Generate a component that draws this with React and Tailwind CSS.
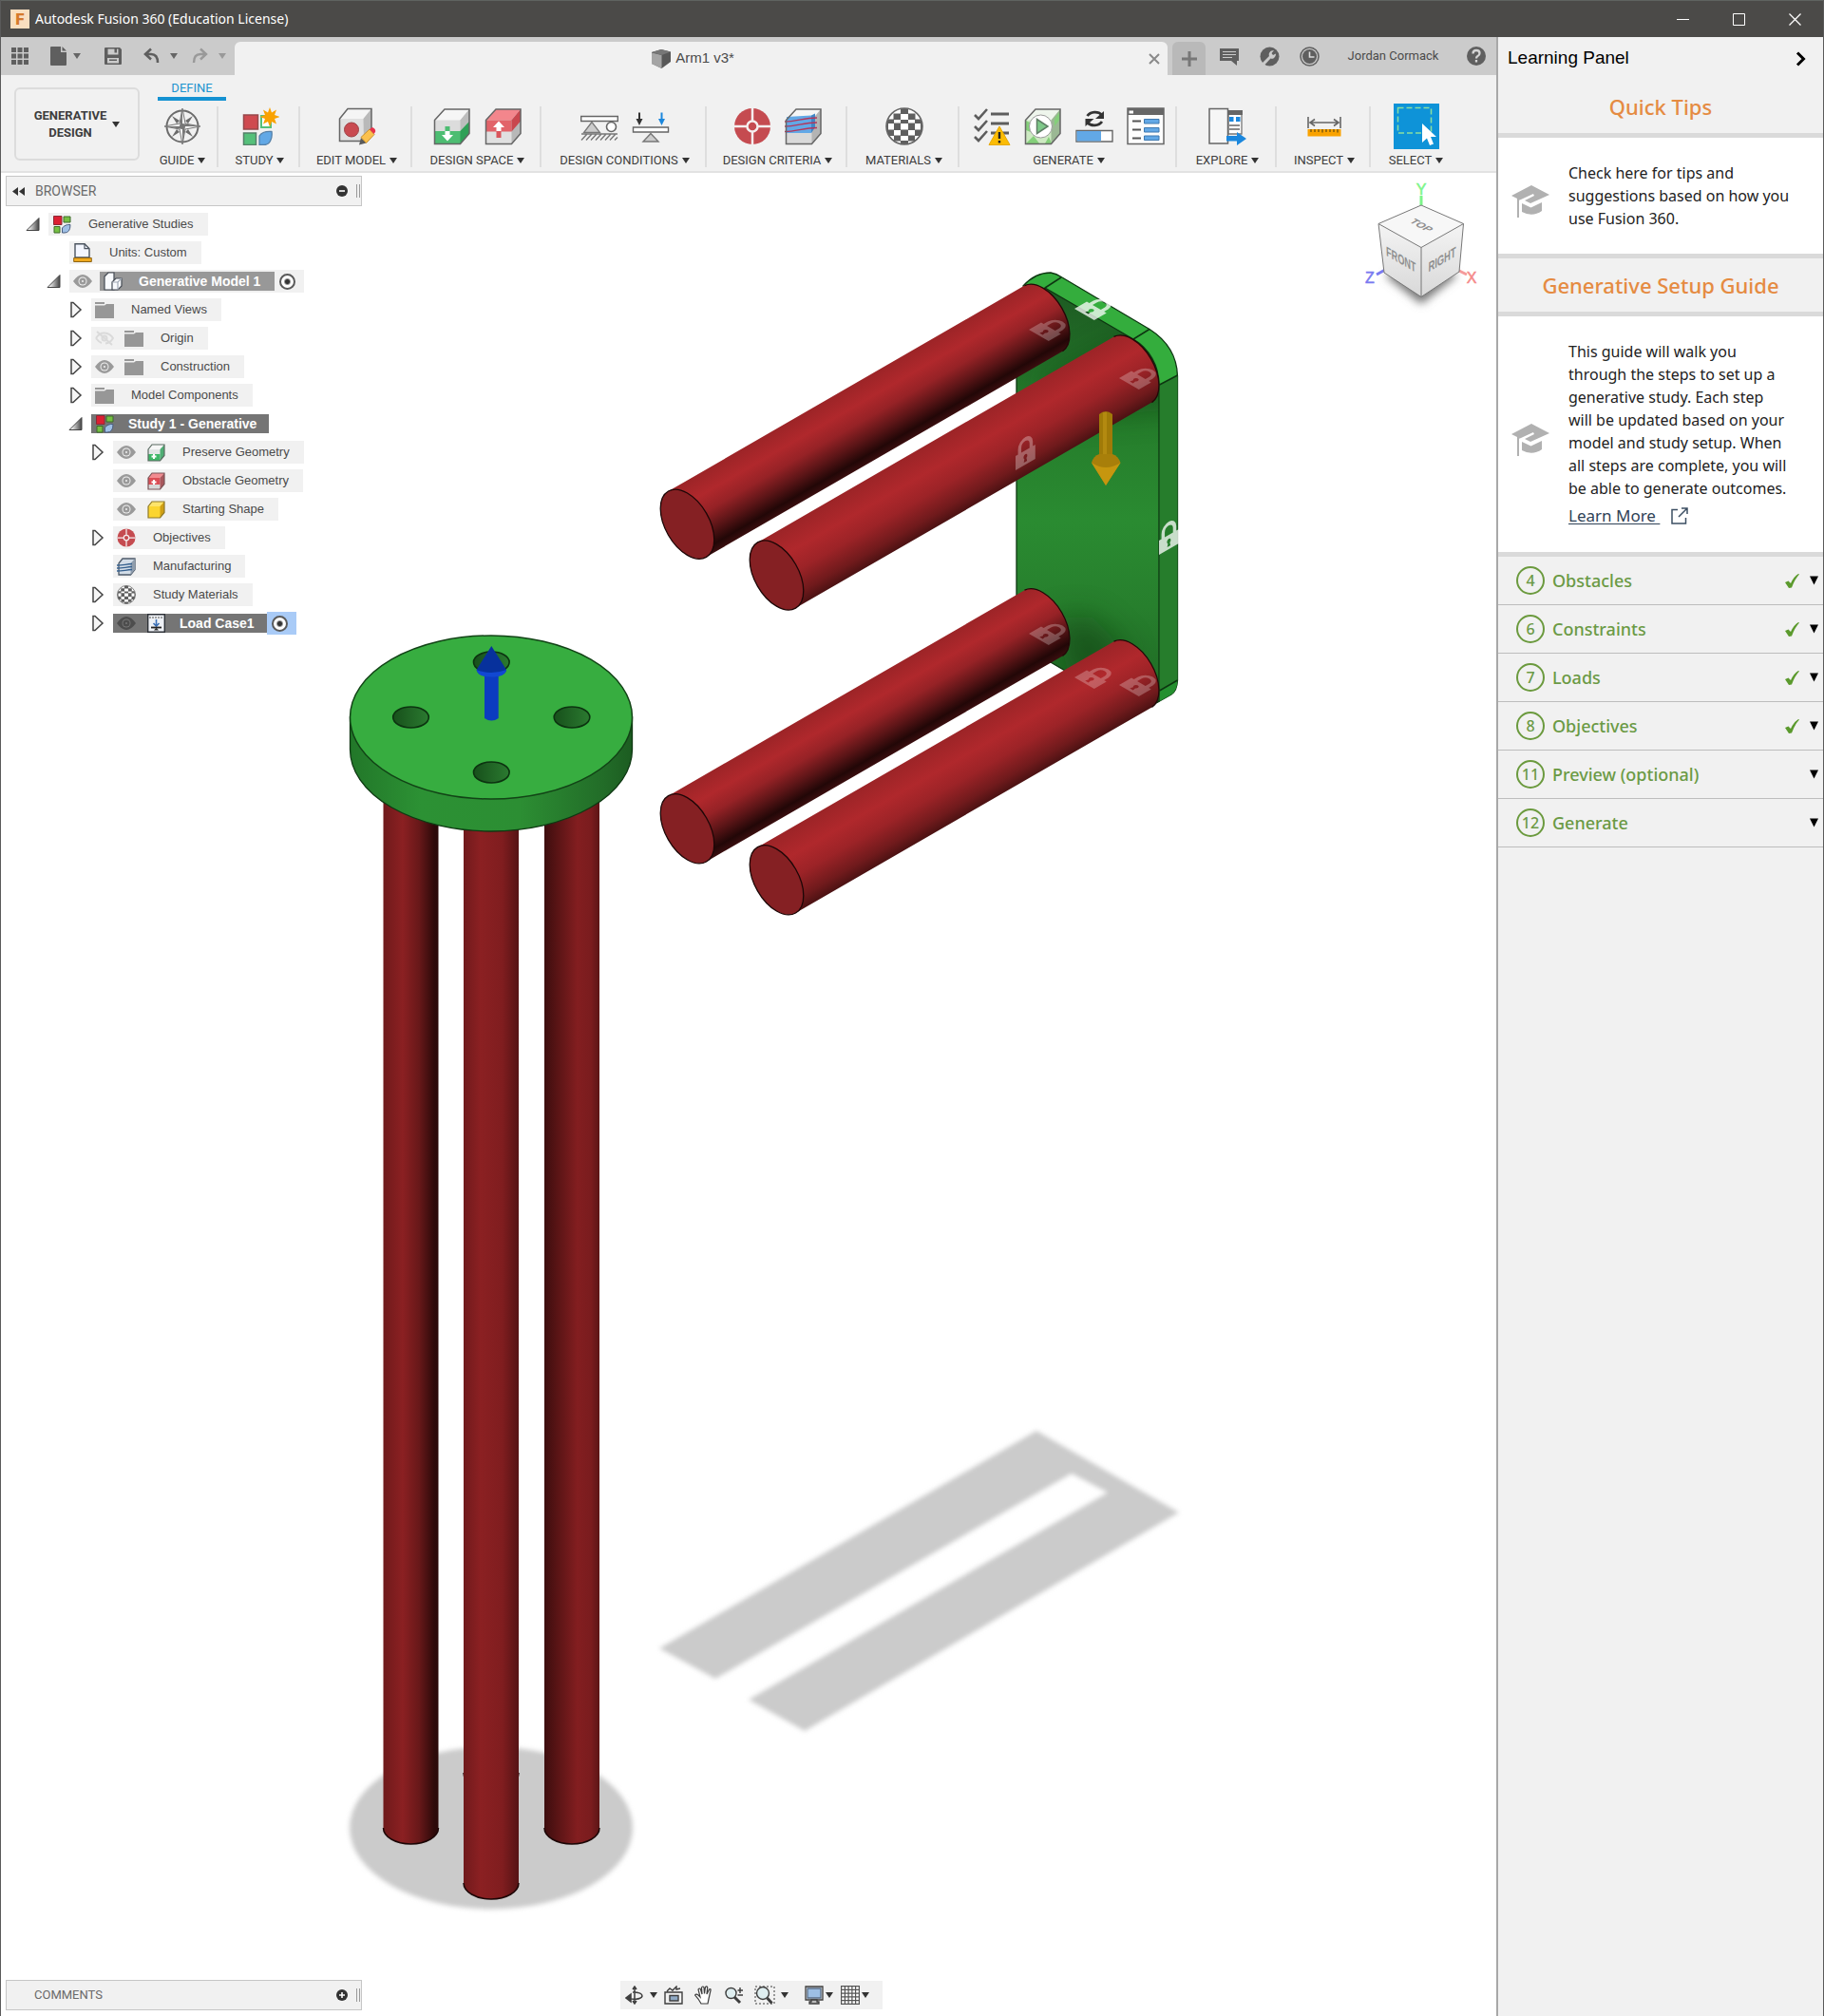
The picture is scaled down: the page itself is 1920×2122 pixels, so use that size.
import React from "react";

/* ---------- small shared pieces ---------- */

function Caret({ className = "text-[#333]" }) {
  return (
    <svg width="8" height="6" viewBox="0 0 8 6" className={className} aria-hidden="true">
      <path d="M0 0h8L4 6z" fill="currentColor" />
    </svg>
  );
}

function IconButton({ label, children, className = "" }) {
  return (
    <button type="button" aria-label={label} className={"flex shrink-0 items-center justify-center " + className}>
      {children}
    </button>
  );
}

function Svg({ size = 40, children }) {
  return (
    <svg width={size} height={size} viewBox="0 0 40 40" fill="none" aria-hidden="true">
      {children}
    </svg>
  );
}

/* ---------- ribbon icons ---------- */

const CompassIcon = () => (
  <Svg>
    <circle cx="20" cy="20" r="16.500" stroke="#6b6b6b" strokeWidth="2" />
    <path d="M9 9l8 5-3 3zM31 9l-8 5 3 3zM9 31l8-5-3-3zM31 31l-8-5 3-3z" fill="#6b6b6b" />
    <path d="M20 1l3 16 16 3-16 3-3 16-3-16-16-3 16-3z" fill="#f2f2f2" stroke="#777" strokeWidth="1" />
    <path d="M20 1v19h-3zM39 20H20v-3zM20 39V20h3zM1 20h19v3z" fill="#777" />
  </Svg>
);

const StudyIcon = () => (
  <Svg>
    <path d="M2.500 8h15v15h-15z" fill="#cf4a50" stroke="#96484b" strokeWidth="1.500" />
    <path d="M2.500 27h13v12.500h-13z" fill="#55c07a" stroke="#55806a" strokeWidth="1.500" />
    <path d="M21 9h10v12H21z" fill="#fff" stroke="#55c07a" strokeWidth="2" />
    <path d="M19 39.500V30c2-3 7-5 13-4.500C33 33 30 39.500 24 39.500z" fill="#62a8e6" stroke="#5580a8" strokeWidth="1.300" />
    <path d="M30 0l2 5.500 5-3-2 5.500 5.500 2-5.500 2 2 5.500-5-2.500-2 5.500-2-5.500-5 2.500 2-5.500-5.500-2 5.500-2-2-5.500 5 3z" fill="#f9a200" />
  </Svg>
);

function Cube({ front, top, side, children }) {
  return (
    <Svg>
      <path d="M1.500 13.500L12 2h26v25.500L28.500 38.500h-27z" fill={front} />
      <path d="M1.500 13.500L12 2h26l-9.500 11.500z" fill={top} />
      <path d="M28.500 13.500L38 2v25.500l-9.500 11z" fill={side} />
      {children}
      <path d="M1.500 13.500L12 2h26v25.500L28.500 38.500h-27z" stroke="#666" strokeWidth="1.500" />
    </Svg>
  );
}

const EditModelIcon = () => (
  <Svg>
    <path d="M1.500 12L10 1.500h25V26l-8 9.500H1.500z" fill="#e0e0e0" />
    <path d="M1.500 12L10 1.500h25L26.500 12z" fill="#f5f5f5" />
    <path d="M26.500 12L35 1.500V26l-8 9.500z" fill="#b9b9b9" />
    <path d="M1.500 12L10 1.500h25V26l-8 9.500H1.500z" stroke="#666" strokeWidth="1.500" />
    <circle cx="14" cy="23.500" r="7.500" fill="#c94a50" stroke="#9d4044" />
    <path d="M22 39.500l2-7.500 5.500 5.500z" fill="#5b5b5b" />
    <path d="M24 31.500l9-8.500 5 5.500-8.500 9z" fill="#fbc14d" stroke="#c8902c" />
    <path d="M33 23l2-1.500c2-1 5 2 4 4.500l-1.500 2z" fill="#e8334b" />
  </Svg>
);

const PreserveIcon = () => (
  <Cube front="#dcdcdc" top="#f6f6f6" side="#bdbdbd">
    <path d="M1.500 25h27L38 15v12.500l-9.500 11h-27z" fill="#4dbd72" />
    <path d="M28.500 25L38 15v12.500l-9.500 11z" fill="#2fa057" />
    <path d="M12.500 20h5v5h-5z" fill="#4dbd72" />
    <path d="M12.500 25h5v4h3.500l-6 6.500-6-6.500h3.500z" fill="#fff" />
  </Cube>
);

const ObstacleIcon = () => (
  <Cube front="#e0e0e0" top="#f3868c" side="#b8b8b8">
    <path d="M1.500 13.500h27v12h-27z" fill="#e26369" />
    <path d="M28.500 13.500L38 2v12.500l-9.500 11z" fill="#c9474e" />
    <path d="M12.500 25h5v7h-5z" fill="#d9555b" />
    <path d="M12.500 25h5v-4H21l-6-6.500L9 21h3.500z" fill="#fff" />
  </Cube>
);

const ConstraintIcon = () => (
  <Svg>
    <path d="M.7 9.500h38.600v5H.7z" fill="#fff" stroke="#666" strokeWidth="1.400" />
    <path d="M12 15.500L3.500 26.500h17z" fill="#ccc" stroke="#777" strokeWidth="1.300" />
    <circle cx="32.500" cy="20.500" r="5" fill="#fff" stroke="#666" strokeWidth="1.600" />
    <path d="M1 28h38M1 34.500L7 28M6 34.500l6-6.500M11 34.500l6-6.500M16 34.500l6-6.500M21 34.500l6-6.500M26 34.500l6-6.500M31 34.500l6-6.500M36 34.500l3-3" stroke="#777" strokeWidth="1.400" />
  </Svg>
);

const LoadIcon = () => (
  <Svg>
    <path d="M8 5.500v10" stroke="#333" strokeWidth="2" />
    <path d="M4.500 12h7L8 19z" fill="#333" />
    <path d="M31.500 5.500v10" stroke="#1b87dd" strokeWidth="2" />
    <path d="M28 12h7l-3.500 7z" fill="#1b87dd" />
    <path d="M1.500 21h37v5h-37z" fill="#fff" stroke="#666" strokeWidth="1.400" />
    <path d="M20 27.500l-8 8.500h16z" fill="#ccc" stroke="#777" strokeWidth="1.400" />
  </Svg>
);

const TargetIcon = ({ size }) => (
  <Svg size={size}>
    <circle cx="20" cy="20" r="19" fill="#c54b50" />
    <path d="M20 1v38M1 20h38" stroke="#f5eeee" strokeWidth="2.500" />
    <circle cx="20" cy="20" r="5.500" fill="#c54b50" stroke="#f5eeee" strokeWidth="2.500" />
  </Svg>
);

const ManufacturingIcon = () => (
  <Cube front="#d9d9d9" top="#f6f6f6" side="#b4b4b4">
    <path d="M2 10l26-1.500V27H2z" fill="#62a8e6" />
    <path d="M28 8.500l4-2V21l-4 6z" fill="#3f86c6" />
    <path d="M0 15c12 0 20-4 34-4M0 20c12 0 20-4 34-4M0 25.500c12 0 20-4 34-4" stroke="#b2365c" strokeWidth="1.500" />
  </Cube>
);

const MaterialsIcon = ({ size }) => (
  <svg width={size || 40} height={size || 40} viewBox="0 0 40 40" fill="none" aria-hidden="true">
    <defs>
      <clipPath id="ball">
        <circle cx="20" cy="20" r="19" />
      </clipPath>
    </defs>
    <circle cx="20" cy="20" r="19" fill="#fff" />
    <g clipPath="url(#ball)" fill="#5f5f5f">
      <path d="M16 0h8v7h-8zM8.500 6.500H16V13H8.500zM24 6.500h7.500V13H24zM1 12.500h8V17H1zM16 13h8v4h-8zM31 12.500h8V17h-8zM9 16.500h7v7.500H9zM24 16.500h7v7.500h-7zM0 16.500h3v7H0zM37 16.500h3v7h-3zM16 23.500h8V30h-8zM2 23.500h7V30H2zM31 23.500h7V30h-7zM9 29.500h7v6H9zM24 29.500h7v6h-7zM16 35h8v5h-8z" />
    </g>
    <circle cx="20" cy="20" r="19" stroke="#666" strokeWidth="1.600" />
  </svg>
);

const PrecheckIcon = () => (
  <Svg>
    <path d="M2 8l4 4 9-10M2 20l4 4 9-10M2 31l4 4 9-10" stroke="#5d5d5d" strokeWidth="2.600" />
    <path d="M19 7h19M19 17h19M19 27h19" stroke="#5d5d5d" strokeWidth="3.200" />
    <path d="M28 20l11 19.500H17z" fill="#fbbc05" stroke="#e6a800" />
    <path d="M28 26v7M28 35v2.500" stroke="#222" strokeWidth="2.400" />
  </Svg>
);

const PlayIcon = () => (
  <Cube front="#cdeac2" top="#eef5ec" side="#9bb894">
    <path d="M2 14l8 4-3 8-5-2zM2 38l8-8 6 8zM22 38l4-7 3 7zM32 12l6-8v8l-6 8z" fill="#84cf7a" />
    <circle cx="17.500" cy="20" r="12" fill="#fff" stroke="#9a9a9a" />
    <path d="M13.500 12.500v15L25 20z" fill="#7fc98a" stroke="#5f7f66" strokeWidth="1.500" />
  </Cube>
);

const ProgressIcon = () => (
  <Svg>
    <path d="M12.500 9A9.500 8 0 0 1 28 8M28 15a9.500 8 0 0 1-15.500 1" stroke="#333" strokeWidth="2.800" />
    <path d="M30 4v8h-9zM10.500 20v-8h9z" fill="#333" />
    <path d="M1 24.500h38V36H1z" fill="#fff" stroke="#666" strokeWidth="1.400" />
    <path d="M1.500 25H27v10.500H1.500z" fill="#62a8e6" />
  </Svg>
);

const TableIcon = () => (
  <Svg>
    <path d="M1 1h38v37.500H1z" fill="#fdfdfd" stroke="#666" strokeWidth="1.500" />
    <path d="M1 1h38v7H1z" fill="#666" />
    <path d="M2.500 3.500H7v3H2.500z" fill="#fff" />
    <path d="M6 14.500h9M6 23.500h9M6 32.500h9" stroke="#555" strokeWidth="1.800" />
    <path d="M18.500 12.500H34V17H18.500zM18.500 21.500H34V26H18.500zM18.500 30H34v4.500H18.500z" fill="#62a8e6" stroke="#3f79b0" strokeWidth="1" />
  </Svg>
);

const ExploreIcon = () => (
  <Svg>
    <path d="M21 4h14v24H21z" fill="#fff" stroke="#777" strokeWidth="1.300" />
    <path d="M20 3h16v5H20z" fill="#666" />
    <path d="M22 10h4.500v5H22zM29 10h4.500v5H29z" fill="#1b87dd" />
    <path d="M22 19h11M22 23h11" stroke="#666" strokeWidth="1.500" />
    <path d="M1 1.500h19.500v36.500H1z" fill="#f6f6f6" stroke="#666" strokeWidth="1.500" />
    <path d="M19 30h11v-4l10 7-10 7v-4.500H19z" fill="#1b87dd" />
  </Svg>
);

const InspectIcon = () => (
  <Svg>
    <path d="M3 10v12M37 10v12" stroke="#666" strokeWidth="1.600" />
    <path d="M5 16h30M10 12.500L5 16l5 3.500M30 12.500l5 3.500-5 3.500" stroke="#666" strokeWidth="1.600" />
    <path d="M2.500 23h35v7.500h-35z" fill="#f9a200" />
    <path d="M6 23v3M10 23v3M14 23v3M18 23v3.500M22 23v3M26 23v3M30 23v3M34 23v3.500" stroke="#6d5210" strokeWidth="1.300" />
  </Svg>
);

const SelectIcon = () => (
  <svg width="48" height="48" viewBox="0 0 48 48" className="bg-[#0e93d8]" aria-hidden="true">
    <rect x="4.500" y="4.500" width="35" height="26.500" fill="none" stroke="#8be0a0" strokeWidth="1.500" strokeDasharray="6 3" />
    <path d="M30 21v20l5-4.500 3 7.500 4-1.500-3-7.500h6z" fill="#fff" />
  </svg>
);

const GROUPS = [
  { name: "GUIDE", width: "w-[77px]", icons: [["Guide", CompassIcon]] },
  { name: "STUDY", width: "w-[86px]", icons: [["New study", StudyIcon]] },
  { name: "EDIT MODEL", width: "w-[118px]", icons: [["Edit model", EditModelIcon]] },
  { name: "DESIGN SPACE", width: "w-[136px]", icons: [["Preserve geometry", PreserveIcon], ["Obstacle geometry", ObstacleIcon]] },
  { name: "DESIGN CONDITIONS", width: "w-[174px]", icons: [["Structural constraints", ConstraintIcon], ["Structural loads", LoadIcon]] },
  { name: "DESIGN CRITERIA", width: "w-[148px]", icons: [["Objectives", TargetIcon], ["Manufacturing", ManufacturingIcon]] },
  { name: "MATERIALS", width: "w-[118px]", icons: [["Study materials", MaterialsIcon]] },
  { name: "GENERATE", width: "w-[229px]", icons: [["Pre-check", PrecheckIcon], ["Previewer", PlayIcon], ["Generate", ProgressIcon], ["Job status", TableIcon]] },
  { name: "EXPLORE", width: "w-[105px]", icons: [["Explore outcomes", ExploreIcon]] },
  { name: "INSPECT", width: "w-[99px]", icons: [["Measure", InspectIcon]] },
  { name: "SELECT", width: "w-[95px]", icons: [["Select", SelectIcon]], last: true },
];

function Ribbon() {
  return (
    <div className="flex h-[103px] items-start border-b-2 border-[#e2e2e2] bg-[#f1f1f1] font-['Roboto',sans-serif] text-[13px] text-[#3d3d3d]">
      <button
        type="button"
        className="mt-[13px] ml-[14px] flex h-[77px] w-[132px] shrink-0 items-center justify-center gap-1.5 rounded-md border-2 border-[#dcdcdc] font-bold leading-[18px]"
      >
        <span>
          GENERATIVE
          <br />
          DESIGN
        </span>
        <Caret />
      </button>
      <div className="ml-[6px] flex flex-col">
        <div role="tablist" className="flex h-[33px] pl-[13px]">
          <button type="button" role="tab" aria-selected="true" className="h-[27px] w-[72px] border-b-4 border-[#1592d2] pt-1 leading-[18px] text-[#1d94cf]">
            DEFINE
          </button>
        </div>
        <div className="flex h-[64px]">
          {GROUPS.map((g) => (
            <div
              key={g.name}
              className={
                "flex flex-col items-center justify-between " + g.width + (g.last ? "" : " border-r-2 border-[#dedede] pl-[3px]")
              }
            >
              <div className="flex h-[42px] items-center gap-[14px]">
                {g.icons.map(([label, Icon]) => (
                  <IconButton key={label} label={label}>
                    <Icon />
                  </IconButton>
                ))}
              </div>
              <button type="button" className="flex items-center gap-1 leading-[15px] whitespace-nowrap">
                {g.name}
                <Caret />
              </button>
            </div>
          ))}
        </div>
      </div>
    </div>
  );
}

/* ---------- title and tab bars ---------- */

function TitleBar() {
  return (
    <header className="flex h-[39px] items-center justify-between border-t border-[#5f6360] bg-[#4b4a48] pl-[10px] text-white">
      <div className="flex items-center gap-[6px]">
        <span className="flex h-5 w-5 items-center justify-center bg-[#f9dfc0] font-['Roboto',sans-serif] text-[17px] leading-5 font-black text-[#d5792b]">F</span>
        <h1 className="font-['Noto_Sans',sans-serif] text-sm">Autodesk Fusion 360 (Education License)</h1>
      </div>
      <div className="flex">
        <IconButton label="Minimize" className="h-[38px] w-[59px]">
          <svg width="13" height="13" viewBox="0 0 13 13"><path d="M0 6.500h13" stroke="#fff" /></svg>
        </IconButton>
        <IconButton label="Maximize" className="h-[38px] w-[59px]">
          <svg width="13" height="13" viewBox="0 0 13 13"><path d="M.5.5h12v12H.5z" fill="none" stroke="#fff" /></svg>
        </IconButton>
        <IconButton label="Close window" className="h-[38px] w-[59px]">
          <svg width="13" height="13" viewBox="0 0 13 13"><path d="M.5.5l12 12M12.500.5l-12 12" stroke="#fff" strokeWidth="1.300" /></svg>
        </IconButton>
      </div>
    </header>
  );
}

function TabBar() {
  return (
    <nav className="flex h-10 items-end bg-[#cbcbcb] text-[#5f5f5f]">
      <div className="flex h-10 w-[246px] shrink-0 items-center pl-[11px]">
        <IconButton label="Data panel">
          <svg width="18" height="18" viewBox="0 0 18 18" fill="currentColor">
            <path d="M0 0h5v5H0zM6.500 0h5v5h-5zM13 0h5v5h-5zM0 6.500h5v5H0zM6.500 6.500h5v5h-5zM13 6.500h5v5h-5zM0 13h5v5H0zM6.500 13h5v5h-5zM13 13h5v5h-5z" />
          </svg>
        </IconButton>
        <IconButton label="File" className="ml-[23px] gap-[7px]">
          <svg width="17" height="20" viewBox="0 0 17 20" fill="currentColor">
            <path d="M0 1q0-1 1-1h10v6h6v13q0 1-1 1H1q-1 0-1-1zM12.500 0l4.500 4.500h-4.500z" />
          </svg>
          <Caret className="text-[#666]" />
        </IconButton>
        <IconButton label="Save" className="ml-[25px]">
          <svg width="18" height="18" viewBox="0 0 18 18" fill="currentColor" fillRule="evenodd">
            <path d="M0 1q0-1 1-1h15l2 2v15q0 1-1 1H1q-1 0-1-1zM3.500 1.500v6h11v-6H13v4h-2.500v-4zM3 11v5.500h12V11zM5 12.500h8V14H5z" />
          </svg>
        </IconButton>
        <IconButton label="Undo" className="ml-[23px] gap-[11px]">
          <svg width="17" height="18" viewBox="0 0 17 18" fill="none" stroke="currentColor" strokeWidth="2.600">
            <path d="M8 1.500L2 7l6 5.500M2.500 7H8q7 0 7 9" />
          </svg>
          <Caret className="text-[#666]" />
        </IconButton>
        <IconButton label="Redo" className="ml-[15px] gap-[11px] text-[#999]">
          <svg width="17" height="18" viewBox="0 0 17 18" fill="none" stroke="currentColor" strokeWidth="2.400">
            <path d="M9 1.500L15 7l-6 5.500M14.500 7H9q-7 0-7 9" />
          </svg>
          <Caret className="text-[#999]" />
        </IconButton>
      </div>
      <div className="relative flex h-[35px] flex-1 items-center justify-center rounded-t-md bg-[#f1f1f1] pr-[17px] font-['Liberation_Sans',sans-serif] text-[15px] text-[#4a4a4a]">
        <svg width="20" height="20" viewBox="0 0 20 20" aria-hidden="true" className="mr-[5px]">
          <path d="M0 3l10-3 10 2.500V13l-9.500 7L0 15z" fill="#585858" />
          <path d="M0 3.500L10.500 6v14L0 15z" fill="#a5a5a5" />
          <path d="M0 3l10-3 10 2.500L10.500 6z" fill="#777" />
        </svg>
        <span>Arm1 v3*</span>
        <button type="button" aria-label="Close document" className="absolute right-[8px] top-[12px]">
          <svg width="12" height="12" viewBox="0 0 12 12"><path d="M1 1l10 10M11 1L1 11" stroke="#8a8a8a" strokeWidth="2" /></svg>
        </button>
      </div>
      <IconButton label="New document" className="ml-[5px] h-[35px] w-[35px] rounded-t-md bg-[#b9b9b9]">
        <svg width="16" height="16" viewBox="0 0 16 16"><path d="M8 0v16M0 8h16" stroke="#777" strokeWidth="3" /></svg>
      </IconButton>
      <div className="flex h-10 w-[306px] shrink-0 items-center justify-between pl-[15px] pr-[11px]">
        <IconButton label="Comments">
          <svg width="20" height="19" viewBox="0 0 20 19">
            <path d="M0 1h20v13h-2v5l-6-5H0z" fill="#5f5f5f" />
            <path d="M3 4.500h14M3 7.500h14M3 10.500h10" stroke="#cbcbcb" strokeWidth="1.200" />
          </svg>
        </IconButton>
        <IconButton label="Extensions">
          <svg width="21" height="21" viewBox="0 0 21 21">
            <circle cx="10.500" cy="10.500" r="10" fill="#5f5f5f" />
            <path d="M2 18l8-8c-1-3 1-6 5-6l-2.500 3 1.500 2 3-1.500c0 4-3 6-5.500 5L5 19.500z" fill="#cbcbcb" />
          </svg>
        </IconButton>
        <IconButton label="Job status">
          <svg width="21" height="21" viewBox="0 0 21 21" fill="none">
            <circle cx="10.500" cy="10.500" r="9.500" stroke="#5f5f5f" strokeWidth="1.500" />
            <circle cx="10.500" cy="10.500" r="7.500" fill="#5f5f5f" />
            <path d="M10.500 5.500V11h5" stroke="#dcdcdc" strokeWidth="1.600" />
          </svg>
        </IconButton>
        <button type="button" className="mx-2 font-['Roboto',sans-serif] text-[13px] text-[#4a4a4a]">Jordan Cormack</button>
        <IconButton label="Help">
          <svg width="20" height="20" viewBox="0 0 20 20" fill="none">
            <circle cx="10" cy="10" r="10" fill="#5f5f5f" />
            <path d="M6.500 7.500q0-3.500 3.500-3.500t3.500 3q0 2-2 3-1.500.8-1.500 2.500M10 14v2.500" stroke="#d5d5d5" strokeWidth="2.300" />
          </svg>
        </IconButton>
      </div>
    </nav>
  );
}

/* ---------- browser tree ---------- */

const StudiesIcon = () => (
  <svg width="19" height="19" viewBox="0 0 19 19" strokeWidth="1">
    <path d="M.5.500h8.500v9H.5z" fill="#dc1f32" stroke="#8b2a35" />
    <path d="M11 1h7v6h-7zM1 11.500h6V18H1z" fill="#76c043" stroke="#3d6b2a" />
    <path d="M9.500 18v-5q3-4 8.500-3.500 0 8.500-6 8.500z" fill="#9fc0e6" stroke="#4a5f80" />
  </svg>
);

const UnitsIcon = () => (
  <svg width="20" height="20" viewBox="0 0 20 20">
    <path d="M2 .7h10l5 5V15H2z" fill="#f3f6ff" stroke="#4c5560" strokeWidth="1.400" />
    <path d="M12 .7v5h5" fill="none" stroke="#4c5560" strokeWidth="1.200" />
    <path d="M.7 15.500h18.600v4H.7z" fill="#f0a91e" stroke="#8e6414" />
  </svg>
);

const EyeIcon = ({ tone = "#9a9a9a", iris = "#f0f0f0" }) => (
  <svg width="20" height="14" viewBox="0 0 20 14">
    <path d="M0 7q10-14 20 0-10 14-20 0z" fill={tone} />
    <circle cx="10" cy="7" r="4.500" fill={iris} />
    <circle cx="10" cy="7" r="3.500" fill={tone} />
    <circle cx="10" cy="7" r="1" fill={iris} />
  </svg>
);

const EyeOffIcon = () => (
  <svg width="20" height="16" viewBox="0 0 20 16" fill="none" stroke="#dadada" strokeWidth="2">
    <path d="M1 8q4-6 9-5.500 6 .500 9 5.500-3 5-8 5.500M1 8q3 4 6 5M2 1l16 14" />
    <circle cx="10" cy="8" r="2.500" />
  </svg>
);

const FolderIcon = () => (
  <svg width="20" height="17" viewBox="0 0 20 17" fill="#979797">
    <path d="M0 0h10v2H0zM0 3.500h10l2-1.500h8v15H0z" />
  </svg>
);

const BodiesIcon = () => (
  <svg width="20" height="20" viewBox="0 0 20 20" fill="#f8fafd" stroke="#454b54" strokeWidth="1.200">
    <path d="M1 5l4-4h6v18H1z" />
    <path d="M9 11l4-4h6v8l-4 4H9z" />
    <path d="M9 11h6l4-4M15 11v8" fill="none" stroke="#a0a8b4" />
  </svg>
);

function MiniCube({ main, dark, top, base }) {
  return (
    <svg width="19" height="19" viewBox="0 0 19 19">
      <path d="M1 6l4-5h13v11.500L13.500 18H1z" fill={base} />
      <path d="M1 6l4-5h13l-4.500 5z" fill={top} />
      <path d={main.d} fill={main.fill} />
      <path d="M13.500 6L18 1v11.500L13.500 18z" fill={dark} />
      {main.plus && <path d={main.plus} stroke="#fff" strokeWidth="2" />}
      <path d="M1 6l4-5h13v11.500L13.500 18H1z" fill="none" stroke={main.line} strokeWidth="1.200" />
    </svg>
  );
}
const MiniPreserve = () => (
  <MiniCube base="#e3e6e6" top="#f7f7f7" dark="#4fae74" main={{ d: "M1 11h12.500v7H1z", fill: "#3eb667", plus: "M7 11v5M4.500 13.500h5", line: "#5b6b62" }} />
);
const MiniObstacle = () => (
  <MiniCube base="#d8d8d8" top="#f28b90" dark="#a9575c" main={{ d: "M1 6h12.500v7H1z", fill: "#db4d55", plus: "M7 8v5M4.500 10.500h5", line: "#7a5558" }} />
);
const MiniStart = () => (
  <MiniCube base="#fbd530" top="#fde46b" dark="#cf9f14" main={{ d: "M1 6h12.500v12H1z", fill: "#fbd530", line: "#8f7a2a" }} />
);
const MiniManufacturing = () => (
  <svg width="20" height="19" viewBox="0 0 20 19">
    <path d="M2 6l4-5h13v11.500L14.500 18H2z" fill="#d3dde8" stroke="#4d5a6a" strokeWidth="1.300" />
    <path d="M14.500 6L19 1v11.500L14.500 18z" fill="#8f9dad" />
    <path d="M0 8c6 0 9-1 16-1.500M0 11c6 0 9-1 16-1.500M0 14c6 0 9-1 16-1.500" fill="none" stroke="#35608f" strokeWidth="1.300" />
  </svg>
);
const LoadCaseIcon = () => (
  <svg width="19" height="20" viewBox="0 0 19 20">
    <path d="M.7.7h17.600v18.600H.7z" fill="#eef1f6" stroke="#2e3238" strokeWidth="1.400" />
    <path d="M2 4h15" stroke="#888" strokeWidth="1.500" strokeDasharray="2 1" />
    <path d="M9.500 6v6M6.500 10l3 3 3-3" stroke="#3b6fb5" strokeWidth="1.600" fill="none" />
    <path d="M4 14.500h11" stroke="#222" strokeWidth="1.800" />
    <path d="M9.500 14.500l-2.500 3h5z" fill="#333" />
  </svg>
);

const SmallTarget = () => <TargetIcon size={20} />;
const SmallMaterials = () => <MaterialsIcon size={20} />;
const DarkEye = () => <EyeIcon tone="#4d4d4d" iris="#777" />;

const INDENT = ["pl-[20px]", "pl-[42px]", "pl-[65px]", "pl-[88px]"];

const TREE = [
  { level: 0, toggle: "open", icons: [StudiesIcon], text: "Generative Studies" },
  { level: 1, icons: [UnitsIcon], text: "Units: Custom" },
  { level: 1, toggle: "open", icons: [EyeIcon], inner: BodiesIcon, text: "Generative Model 1", style: "model", radio: true },
  { level: 2, toggle: "closed", icons: [FolderIcon], text: "Named Views" },
  { level: 2, toggle: "closed", icons: [EyeOffIcon, FolderIcon], text: "Origin" },
  { level: 2, toggle: "closed", icons: [EyeIcon, FolderIcon], text: "Construction" },
  { level: 2, toggle: "closed", icons: [FolderIcon], text: "Model Components" },
  { level: 2, toggle: "open", icons: [StudiesIcon], text: "Study 1 - Generative", style: "dark" },
  { level: 3, toggle: "closed", icons: [EyeIcon, MiniPreserve], text: "Preserve Geometry" },
  { level: 3, icons: [EyeIcon, MiniObstacle], text: "Obstacle Geometry" },
  { level: 3, icons: [EyeIcon, MiniStart], text: "Starting Shape" },
  { level: 3, toggle: "closed", icons: [SmallTarget], text: "Objectives" },
  { level: 3, icons: [MiniManufacturing], text: "Manufacturing" },
  { level: 3, toggle: "closed", icons: [SmallMaterials], text: "Study Materials" },
  { level: 3, toggle: "closed", icons: [DarkEye, LoadCaseIcon], text: "Load Case1", style: "dark", radio: true },
];

function Toggle({ kind, label }) {
  if (!kind) return <span className="w-[25px]" />;
  return (
    <button type="button" aria-label={"Toggle " + label} aria-expanded={kind === "open"} className="flex w-[25px] justify-start">
      {kind === "open" ? (
        <svg width="16" height="16" viewBox="0 0 16 16">
          <defs>
            <linearGradient id="tri">
              <stop offset="0.200" stopColor="#eee" />
              <stop offset="1" stopColor="#444" />
            </linearGradient>
          </defs>
          <path d="M15 1.500v13H2z" fill="url(#tri)" stroke="#444" />
        </svg>
      ) : (
        <svg width="16" height="18" viewBox="0 0 16 18">
          <path d="M4 1.500h2l8 7.500-8 7.500H4z" fill="#f6f6f6" stroke="#444" strokeWidth="1.500" />
        </svg>
      )}
    </button>
  );
}

function Radio({ name, label }) {
  return (
    <input
      type="radio"
      name={name}
      defaultChecked
      aria-label={label}
      className="h-[17px] w-[17px] appearance-none rounded-full border-2 border-[#5a5a5a] bg-white bg-[radial-gradient(circle,#333_2px,transparent_4px)]"
    />
  );
}

function TreeRow({ row }) {
  const Inner = row.inner;
  return (
    <li className={"flex h-6 items-center " + INDENT[row.level]}>
      <Toggle kind={row.toggle} label={row.text} />
      <div className={"flex items-center " + (row.style === "dark" ? "h-5 bg-[#757575] text-white" : "h-6 bg-[#f1f1f1]")}>
        <span className={"flex items-center gap-[11px] pl-1 " + (Inner ? "pr-[8px]" : "")}>
          {row.icons.map((Icon, i) => (
            <span key={i} className="flex w-5 justify-center">
              <Icon />
            </span>
          ))}
        </span>
        {Inner ? (
          <span className="flex h-5 items-center bg-[#989898] pr-[15px] pl-1 text-sm font-bold text-white">
            <Inner />
            <span className="pl-[17px]">{row.text}</span>
          </span>
        ) : (
          <span className={row.style === "dark" ? "pl-[15px] pr-[13px] text-sm font-bold" : "pl-[18px] pr-[15px]"}>{row.text}</span>
        )}
        {row.radio && (
          <span className={"flex h-6 w-[31px] items-center pl-[5px] " + (row.style === "dark" ? "bg-[#a9cbf7]" : "")}>
            <Radio name={row.text} label={"Activate " + row.text} />
          </span>
        )}
      </div>
    </li>
  );
}

function PanelHeader({ children, label }) {
  return (
    <div className="flex h-8 w-[375px] items-center border border-[#c6c6c6] bg-[#f1f1f1] font-['Roboto',sans-serif] text-[#6a6a6a]">
      {children}
      <span className="ml-auto flex items-center gap-[9px] pr-px">
        <IconButton label={label}>
          <svg width="12" height="12" viewBox="0 0 12 12">
            <circle cx="6" cy="6" r="6" fill="#333" />
            <path d={label === "Collapse browser" ? "M3 6h6" : "M3 6h6M6 3v6"} stroke="#fff" strokeWidth="1.600" />
          </svg>
        </IconButton>
        <span className="h-[14px] w-[4px] border-x border-[#999]" />
      </span>
    </div>
  );
}

function Browser() {
  return (
    <aside className="relative flex w-[380px] flex-col pt-[3px] pl-[5px] font-['Liberation_Sans',sans-serif] text-[13px] text-[#4a4a4a]">
      <PanelHeader label="Collapse browser">
        <IconButton label="Hide browser" className="pl-[6px]">
          <svg width="13" height="9" viewBox="0 0 13 9"><path d="M6 0v9L0 4.500zM13 0v9L7 4.500z" fill="#333" /></svg>
        </IconButton>
        <h2 className="pl-[11px] text-sm">BROWSER</h2>
      </PanelHeader>
      <ul className="flex flex-col gap-1.5 pt-[7px]">
        {TREE.map((row) => (
          <TreeRow key={row.text} row={row} />
        ))}
      </ul>
    </aside>
  );
}

/* ---------- 3D scene ---------- */

function Rod({ x, y, fill }) {
  return (
    <g transform={`translate(${x} ${y})`}>
      <path d="M-20 -34.600L355 -251.100A40 23.100 60 0 1 395 -181.900L20 34.600z" fill={fill} />
      <path d="M355 -251.100A40 23.100 60 0 1 395 -181.900" fill="none" stroke="#240607" strokeWidth="1.300" />
      <ellipse rx="40" ry="23.100" transform="rotate(60)" fill="#852023" stroke="#1c0606" strokeWidth="1.300" />
    </g>
  );
}

function Lock({ m, opacity = 0.25 }) {
  return (
    <g transform={`matrix(${m})`} opacity={opacity}>
      <path
        d="M0 -15H3V-20a9 9 0 0 1 18 0v5h3V0H0zM7 -15h10v-5a5 5 0 0 0-10 0zM12 -11a2.500 2.500 0 0 0-1.200 4.600L10 -3h4l-.8-3.400A2.500 2.500 0 0 0 12 -11z"
        fill="#fff"
        fillRule="evenodd"
      />
    </g>
  );
}

function Pillar({ x, bottom, fill }) {
  return (
    <g>
      <path d={`M${x - 29} 800V${bottom}a29 17 0 0 0 58 0V800z`} fill={fill} />
      <path d={`M${x - 29} ${bottom}a29 17 0 0 0 58 0`} fill="none" stroke="#1c0606" strokeWidth="1.500" />
    </g>
  );
}

function Scene() {
  return (
    <svg
      viewBox="1 182 1574 1940"
      preserveAspectRatio="xMinYMin meet"
      className="absolute inset-0 h-full w-full"
      role="img"
      aria-label="Arm model with preserve and obstacle geometry"
    >
      <defs>
        <linearGradient id="rodBack" gradientUnits="userSpaceOnUse" x1="-20" y1="-34.600" x2="20" y2="34.600">
          <stop offset="0" stopColor="#9c2427" />
          <stop offset="0.260" stopColor="#b0282c" />
          <stop offset="0.480" stopColor="#962226" />
          <stop offset="0.700" stopColor="#5c1517" />
          <stop offset="0.900" stopColor="#220707" />
          <stop offset="1" stopColor="#3a0e0f" />
        </linearGradient>
        <linearGradient id="rodFront" gradientUnits="userSpaceOnUse" x1="-20" y1="-34.600" x2="20" y2="34.600">
          <stop offset="0" stopColor="#9c2427" />
          <stop offset="0.320" stopColor="#b0282c" />
          <stop offset="0.580" stopColor="#9c2327" />
          <stop offset="0.850" stopColor="#701a1c" />
          <stop offset="1" stopColor="#4c1213" />
        </linearGradient>
        <linearGradient id="pillarL">
          <stop offset="0" stopColor="#6f1a1b" />
          <stop offset="0.350" stopColor="#8b2022" />
          <stop offset="0.650" stopColor="#681819" />
          <stop offset="0.920" stopColor="#2e0a0a" />
          <stop offset="1" stopColor="#2a0909" />
        </linearGradient>
        <linearGradient id="pillarM">
          <stop offset="0" stopColor="#701a1c" />
          <stop offset="0.300" stopColor="#8b2022" />
          <stop offset="0.700" stopColor="#801d1f" />
          <stop offset="1" stopColor="#551315" />
        </linearGradient>
        <linearGradient id="pillarR">
          <stop offset="0" stopColor="#3d0d0e" />
          <stop offset="0.200" stopColor="#551314" />
          <stop offset="0.600" stopColor="#831e20" />
          <stop offset="0.850" stopColor="#7a1c1e" />
          <stop offset="1" stopColor="#5c1516" />
        </linearGradient>
        <linearGradient id="rim">
          <stop offset="0" stopColor="#227729" />
          <stop offset="0.250" stopColor="#2c9134" />
          <stop offset="0.600" stopColor="#2c8e33" />
          <stop offset="0.900" stopColor="#226c28" />
          <stop offset="1" stopColor="#1c5c21" />
        </linearGradient>
        <linearGradient id="hole">
          <stop offset="0" stopColor="#17501b" />
          <stop offset="1" stopColor="#2b7a30" />
        </linearGradient>
        <linearGradient id="face" x1="0" y1="0" x2="0" y2="1">
          <stop offset="0" stopColor="#1d5a22" />
          <stop offset="0.300" stopColor="#257c2b" />
          <stop offset="0.550" stopColor="#2a8b31" />
          <stop offset="0.750" stopColor="#277f2d" />
          <stop offset="1" stopColor="#1f6824" />
        </linearGradient>
        <clipPath id="faceClip">
          <path d="M1070 330V664Q1070 677 1082 683L1196 750 1220 738V405C1220 385 1210 367 1193 357L1100 303z" />
        </clipPath>
        <filter id="soft" x="-10%" y="-10%" width="120%" height="120%">
          <feGaussianBlur stdDeviation="2.500" />
        </filter>
        <filter id="shade" x="-50%" y="-50%" width="200%" height="200%">
          <feGaussianBlur stdDeviation="16" />
        </filter>
      </defs>

      <ellipse cx="517" cy="1924" rx="149" ry="85.500" fill="#cbcbcb" filter="url(#soft)" />
      <path d="M694 1735L1091 1506 1241 1592 847 1822 788 1789 1166 1571 1128 1551 753 1767z" fill="#cbcbcb" filter="url(#soft)" />

      <Pillar x={517} bottom={1866} fill="url(#pillarM)" />
      <Pillar x={432.5} bottom={1924} fill="url(#pillarL)" />
      <Pillar x={602} bottom={1924} fill="url(#pillarR)" />
      <Pillar x={517} bottom={1982} fill="url(#pillarM)" />

      <path d="M368.500 755v34a148.500 86 0 0 0 297 0v-34z" fill="url(#rim)" stroke="#0e3812" strokeWidth="1.300" />
      <ellipse cx="517" cy="755" rx="148.500" ry="86" fill="#37ad40" stroke="#124316" strokeWidth="1.500" />
      {[[432.5, 755], [602, 755], [517.3, 697], [517.3, 813]].map(([cx, cy]) => (
        <ellipse key={`${cx}-${cy}`} cx={cx} cy={cy} rx="18.800" ry="11" fill="url(#hole)" stroke="#0c3310" strokeWidth="1.600" />
      ))}
      <path d="M510 705h14.700v51q-7.300 5-14.700 0z" fill="#0b3cc0" />
      <path d="M517.300 680l15.700 25q-1 7-15.700 7t-15.700-7z" fill="#07319c" />
      <path d="M501.600 705q15.700 6 31.400 0-1 7.500-15.700 7.500t-15.700-7.500z" fill="#1148d2" />

      <g>
        <path d="M1077 301C1086 291 1096 287 1106 287Q1112 288 1118 292L1210 346.500C1228 358 1239 375 1239.500 396V716Q1239 727 1233 731L1210 744 1192 357z" fill="#34ad3d" stroke="#0d3611" strokeWidth="1.300" />
        <path d="M1220.500 405L1239.500 395V716L1220.500 727z" fill="#267d2c" />
        <path d="M1220.500 727L1239.500 716Q1239 727 1233 731L1212 743z" fill="#259030" />
        <path d="M1070 330V664Q1070 677 1082 683L1196 750 1220 738V405C1220 385 1210 367 1193 357L1100 303z" fill="url(#face)" stroke="#0d3611" strokeWidth="1.300" />
        <g clipPath="url(#faceClip)">
          <path d="M1100 400L1240 330 1250 430 1120 440z" fill="#0c3510" opacity="0.400" filter="url(#shade)" />
          <path d="M1110 650L1150 650 1190 690 1130 730z" fill="#0c3510" opacity="0.500" filter="url(#shade)" />
        </g>
        <path d="M1100 303L1117 292M1193 357L1210 346.500M1220.500 405L1239.500 395M1220.500 727L1239.500 716" stroke="#0d3611" strokeWidth="1.500" />
      </g>

      <Rod x={723.5} y={551.7} fill="url(#rodBack)" />
      <Rod x={817.5} y={605.5} fill="url(#rodFront)" />
      <Rod x={723.5} y={872.3} fill="url(#rodBack)" />
      <Rod x={817.5} y={926.3} fill="url(#rodFront)" />

      <path d="M1157 436q7-6 14 0v44h-14z" fill="#a07a08" />
      <path d="M1161 434h4v46h-4z" fill="#b38a10" />
      <path d="M1149 487q2-7 8-9h14q6 2 8.500 9L1164 511z" fill="#a87f0a" />
      <path d="M1149 487q15 10 30.500 0L1164 511z" fill="#c6960f" />

      <Lock m=".866 .5 -.866 .5 1131 325" opacity={0.75} />
      <Lock m=".866 .5 -.866 .5 1083 347" />
      <Lock m=".866 .5 -.866 .5 1178 398" />
      <Lock m=".866 .5 -.866 .5 1083 667" />
      <Lock m=".866 .5 -.866 .5 1178 721" />
      <Lock m=".866 .5 -.866 .5 1131 713" />
      <Lock m=".866 -.5 0 1 1069 495" opacity={0.3} />
      <Lock m=".866 -.5 0 1 1220 584" opacity={0.75} />
    </svg>
  );
}

function ViewCube() {
  return (
    <svg width="130" height="150" viewBox="1430 185 130 150" className="absolute top-[3px] right-[15px] font-['Liberation_Sans',sans-serif]" role="img" aria-label="View cube">
      <defs>
        <filter id="cubeShadow" x="-30%" y="-30%" width="160%" height="160%">
          <feGaussianBlur stdDeviation="5" />
        </filter>
        <linearGradient id="cubeL" x1="0" y1="0" x2="0" y2="1">
          <stop offset="0" stopColor="#f4f4f4" />
          <stop offset="1" stopColor="#d8d8d8" />
        </linearGradient>
      </defs>
      <path d="M1458 290l38 -20 38 20-38 30z" fill="#777" filter="url(#cubeShadow)" />
      <path d="M1496 206v10" stroke="#7df58a" strokeWidth="3" />
      <path d="M1449 289l9-5" stroke="#7a7af0" strokeWidth="3" />
      <path d="M1534 284l10 5" stroke="#f59a9a" strokeWidth="3" />
      <path d="M1451 235.500L1496 216l44.500 19.500L1496 260.500z" fill="#f7f7f7" />
      <path d="M1451 235.500L1496 260.500V312.500L1457 287z" fill="url(#cubeL)" />
      <path d="M1540.500 235.500L1496 260.500V312.500L1536 286z" fill="url(#cubeL)" />
      <path d="M1451 235.500L1496 216l44.500 19.500L1496 260.500zM1451 235.500L1457 287 1496 312.500 1536 286 1540.500 235.500M1496 260.500V312.500" fill="none" stroke="#777" strokeWidth="1" />
      <g fill="#8f8f8f" fontSize="12" fontWeight="bold" textAnchor="middle">
        <text transform="matrix(.82 .45 -.8 .45 1493 239)">TOP</text>
        <text transform="matrix(.76 .44 .04 1.200 1475 278)">FRONT</text>
        <text transform="matrix(.78 -.46 -.02 1.200 1518 278)">RIGHT</text>
      </g>
      <g fontSize="16" textAnchor="middle" strokeWidth="0.500">
        <text x="1496" y="205" fill="#7df58a" stroke="#7df58a">Y</text>
        <text x="1442" y="298" fill="#7a7af0" stroke="#7a7af0">Z</text>
        <text x="1549" y="298" fill="#f58a8a" stroke="#f58a8a">X</text>
      </g>
    </svg>
  );
}

/* ---------- bottom bar ---------- */

function NavBar() {
  return (
    <div className="flex h-[30px] items-center bg-[#f1f1f1] pl-[5px] pr-[14px]">
      <IconButton label="Orbit" className="gap-[6px]">
        <svg width="20" height="20" viewBox="0 0 20 20" fill="none" stroke="#3e3e3e" strokeWidth="1.500">
          <path d="M10 1v18M8 4l2-3 2 3M8 16l2 3 2-3M3 13c3 2 14 2 15-2 0-3-5-4-10-4" />
          <path d="M6 9l-5 4 5 4z" fill="#3e3e3e" />
        </svg>
        <Caret />
      </IconButton>
      <IconButton label="Look at" className="ml-[7px]">
        <svg width="20" height="20" viewBox="0 0 20 20" fill="none" stroke="#3e3e3e" strokeWidth="1.400">
          <path d="M1 7h18v12H1zM3 6l3-3 3 2 4-4v3l4-1" />
          <path d="M6 10.500h9v5.500H6z" fill="#8fa9c4" />
        </svg>
      </IconButton>
      <IconButton label="Pan" className="ml-[12px]">
        <svg width="20" height="20" viewBox="0 0 20 20" fill="#fff" stroke="#3e3e3e" strokeWidth="1.200">
          <path d="M7 19l-3-5-3.500-4q1.500-2 4 .5L6 12 4 4q1.500-2 2.500 0L8 9 7.500 2q1.500-2 2.500 0l.5 6.500 1-7q1.700-1.500 2.200.5L13 9l2.500-5q2-1 1.500 1l-2 9-1 5z" />
        </svg>
      </IconButton>
      <IconButton label="Zoom" className="ml-[11px]">
        <svg width="21" height="20" viewBox="0 0 21 20" fill="none" stroke="#3e3e3e" strokeWidth="1.400">
          <circle cx="7.500" cy="8" r="5.500" fill="#dfeef0" />
          <path d="M11 12l6 6" strokeWidth="3" />
          <path d="M14.500 5h5.500M17 2v6M14.500 10h5.500" />
        </svg>
      </IconButton>
      <IconButton label="Zoom window" className="ml-[11px] gap-[6px]">
        <svg width="22" height="20" viewBox="0 0 22 20" fill="none" stroke="#3e3e3e" strokeWidth="1.400">
          <path d="M1 1h20v18H1z" strokeDasharray="2 2" strokeWidth="1" />
          <circle cx="9" cy="8" r="6.500" fill="#dfeef0" />
          <path d="M13.500 13l5 5.500" strokeWidth="3" />
        </svg>
        <Caret />
      </IconButton>
      <IconButton label="Display settings" className="ml-[17px] gap-[2px]">
        <svg width="20" height="20" viewBox="0 0 20 20" stroke="#3e3e3e" strokeWidth="1.300">
          <path d="M1 1h18v14H1z" fill="#e6e6e6" />
          <path d="M3 3h14v10H3z" fill="#9dbfe4" stroke="#5a6f88" />
          <path d="M7 15h6v2h2v2H5v-2h2z" fill="#bbb" />
        </svg>
        <Caret />
      </IconButton>
      <IconButton label="Grid settings" className="ml-[8px] gap-[2px]">
        <svg width="20" height="20" viewBox="0 0 20 20" fill="#fff" stroke="#555" strokeWidth="1.200">
          <path d="M.6.600h18.800v18.800H.6z" />
          <path d="M4.400 1v18M8.100 1v18M11.900 1v18M15.600 1v18M1 4.400h18M1 8.100h18M1 11.900h18M1 15.600h18" />
        </svg>
        <Caret />
      </IconButton>
    </div>
  );
}

/* ---------- learning panel ---------- */

const CapIcon = () => (
  <svg width="40" height="35" viewBox="0 0 40 35" fill="#b1b1b1" className="shrink-0" aria-hidden="true">
    <path d="M0 11L21 0l19 10-20 9-6-3 10-5-1-2-13 6-2 .8V34H6V14z" />
    <path d="M11 19l9.500 4.500L32 18v9q-10 7-21 1z" />
  </svg>
);

function SectionHeading({ children }) {
  return (
    <h3 className="border-b-[5px] border-[#dadada] py-3 text-center text-[22px] leading-8 font-medium text-[#e58b42]">{children}</h3>
  );
}

const GUIDE_LINES = [
  "This guide will walk you",
  "through the steps to set up a",
  "generative study. Each step",
  "will be updated based on your",
  "model and study setup. When",
  "all steps are complete, you will",
  "be able to generate outcomes.",
];

const STEPS = [
  [4, "Obstacles", true],
  [6, "Constraints", true],
  [7, "Loads", true],
  [8, "Objectives", true],
  [11, "Preview (optional)", false],
  [12, "Generate", false],
];

function LearningPanel() {
  return (
    <aside className="w-[344px] shrink-0 border-l-2 border-[#a8a8a8] bg-[#f1f1f1] font-['Noto_Sans',sans-serif] text-[#222]">
      <div className="flex h-[45px] items-center justify-between pl-[10px] pr-[18px]">
        <h2 className="font-['Liberation_Sans',sans-serif] text-[19px] text-black">Learning Panel</h2>
        <IconButton label="Collapse learning panel">
          <svg width="11" height="16" viewBox="0 0 11 16"><path d="M2 1.500L8.500 8 2 14.500" fill="none" stroke="#000" strokeWidth="3" /></svg>
        </IconButton>
      </div>
      <SectionHeading>Quick Tips</SectionHeading>
      <div className="flex items-center gap-5 border-b-[5px] border-[#dadada] bg-white py-[25px] pl-[14px] pr-5">
        <div className="pt-3">
          <CapIcon />
        </div>
        <p className="text-base leading-6">Check here for tips and suggestions based on how you use Fusion 360.</p>
      </div>
      <SectionHeading>Generative Setup Guide</SectionHeading>
      <div className="flex items-center gap-5 border-b-[5px] border-[#dadada] bg-white py-[25px] pl-[14px] pr-2">
        <div className="pt-3">
          <CapIcon />
        </div>
        <div>
          <p className="text-base leading-6">
            {GUIDE_LINES.map((line) => (
              <React.Fragment key={line}>
                {line}
                <br />
              </React.Fragment>
            ))}
          </p>
          <a href="#learn-more" className="mt-1 inline-flex items-center gap-3 text-[17px] leading-[26px] text-[#2f4256]">
            <span className="underline underline-offset-2">Learn More&nbsp;</span>
            <svg width="18" height="18" viewBox="0 0 18 18" fill="none" stroke="#3c4f63" strokeWidth="1.500">
              <path d="M7 2.500H1V17h14.500v-6M11 1h6v6M17 1L8 10" />
            </svg>
          </a>
        </div>
      </div>
      <ol>
        {STEPS.map(([n, name, done]) => (
          <li key={n} className="border-b border-[#bdbdbd]">
            <button type="button" className="flex h-[50px] w-full items-center pl-[19px] pr-[5px] text-lg font-medium text-[#6b9a45]">
              <span className="flex h-[30px] w-[30px] items-center justify-center rounded-full border-2 border-[#6b9a3e] text-base">{n}</span>
              <span className="pl-2">{name}</span>
              <span className="ml-auto flex items-center gap-[11px]">
                {done && (
                  <svg width="15" height="15" viewBox="0 0 15 15" role="img" aria-label="Complete">
                    <path d="M0 9l3.500-1.500L6 10q3-7 8-10l1 .5Q10 6 7 14.500L4 15z" fill="#5b9a2d" />
                  </svg>
                )}
                <svg width="9" height="10" viewBox="0 0 9 10" aria-hidden="true"><path d="M0 .5h9L4.500 9.500z" fill="#000" /></svg>
              </span>
            </button>
          </li>
        ))}
      </ol>
    </aside>
  );
}

export default function App() {
  return (
    <div className="flex min-h-screen flex-col border-x border-[#5a5a5a] bg-white">
      <TitleBar />
      <div className="flex flex-1">
        <main className="flex min-w-0 flex-1 flex-col">
          <TabBar />
          <Ribbon />
          <section className="relative flex flex-1 flex-col justify-between bg-white">
            <Scene />
            <ViewCube />
            <Browser />
            <div className="relative grid grid-cols-[1fr_auto_1fr] items-center pb-[6px] pl-[5px]">
              <PanelHeader label="Add comment">
                <h2 className="pl-[29px] text-[13px]">COMMENTS</h2>
              </PanelHeader>
              <NavBar />
            </div>
          </section>
        </main>
        <LearningPanel />
      </div>
    </div>
  );
}
